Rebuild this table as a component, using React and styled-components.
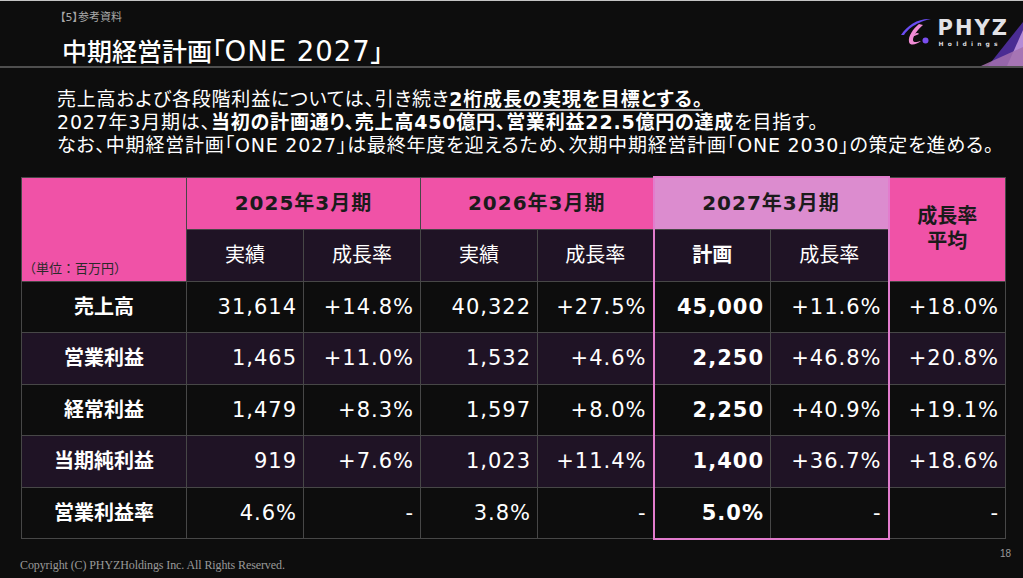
import React from 'react';
import styled, { createGlobalStyle } from 'styled-components';

const GlobalStyle = createGlobalStyle`
  html, body {
    margin: 0;
    padding: 0;
    background: #0d0d0d;
  }
  body {
    font-family: "DejaVu Sans", "Noto Sans CJK JP", sans-serif;
  }
`;

const Slide = styled.div`
  width: 1023px;
  height: 578px;
  box-sizing: border-box;
  border-top: 1px solid #c4c4c4;
  background: #0d0d0d;
  overflow: hidden;
  display: flex;
  flex-direction: column;
`;

const Header = styled.header`
  position: relative;
  flex: none;
  height: 65px;
  border-bottom: 2px solid #4e4e4e;
  padding-left: 60px;
  display: flex;
  justify-content: space-between;
`;

const HeadText = styled.div`
  display: flex;
  flex-direction: column;
`;

const SectionLabel = styled.div`
  margin-top: 10px;
  font-size: 11px;
  line-height: 14px;
  color: #a8a8a8;
  font-feature-settings: "palt";
`;

const Title = styled.h1`
  margin: 11px 0 0 2px;
  font-size: 25px;
  line-height: 30px;
  font-weight: 500;
  color: #ffffff;
  font-feature-settings: "palt";
  white-space: nowrap;
`;

const Latin = styled.span`
  font-size: 1.1em;
  letter-spacing: 1px;
`;

const Logo = styled.div`
  display: flex;
  align-items: flex-start;
  gap: 6px;
  margin: 15px 14px 0 0;
  position: relative;
  z-index: 1;
`;

const LogoWords = styled.div`
  display: flex;
  flex-direction: column;
  margin-top: 2px;
`;

const LogoName = styled.span`
  font-family: "DejaVu Sans", sans-serif;
  font-weight: bold;
  font-size: 21px;
  line-height: 21px;
  letter-spacing: 2px;
  color: #e2e2e6;
`;

const LogoSub = styled.span`
  font-family: "DejaVu Sans", sans-serif;
  font-weight: bold;
  font-size: 6px;
  line-height: 9px;
  letter-spacing: 4.2px;
  color: #d6d6da;
  margin-left: 1px;
`;

const Corner = styled.svg`
  position: absolute;
  right: 0;
  bottom: 0;
`;

const Lead = styled.div`
  flex: none;
  margin: 20px 0 0 57px;
  font-size: 19px;
  line-height: 23px;
  letter-spacing: 0.8px;
  color: #ffffff;
  white-space: nowrap;
  font-feature-settings: "palt";
`;

const Strong = styled.b`
  font-weight: bold;
`;

const Goal = styled.b`
  font-weight: bold;
  text-decoration: underline;
  text-decoration-thickness: 2px;
  text-underline-offset: 3px;
  text-decoration-color: #b8b8b8;
`;

const Table = styled.table`
  flex: none;
  margin: 19px 0 0 21px;
  width: 984px;
  table-layout: fixed;
  border-collapse: collapse;
  border: 1px solid #474747;
`;

const Row = styled.tr`
  height: ${p => (p.$head ? '52px' : '51.5px')};
`;

const Cell = styled.td`
  padding: 0 6px 0 0;
  border: 1px solid #474747;
  color: #ffffff;
  font-size: 21px;
  line-height: 24px;
  letter-spacing: 1px;
  text-align: right;
  background: ${p => (p.$alt ? '#1f1325' : '#0d0d0d')};
  font-weight: ${p => (p.$bold ? 'bold' : 'normal')};
  ${p => p.$planLeft && 'border-left: 2px solid #e27ccd;'}
  ${p => p.$planRight && 'border-right: 2px solid #e27ccd;'}
  ${p => p.$planBottom && 'border-bottom: 2px solid #e27ccd;'}
`;

const RowLabel = styled.th`
  padding: 0;
  border: 1px solid #474747;
  color: #ffffff;
  font-size: 20px;
  line-height: 24px;
  font-weight: bold;
  text-align: center;
  background: ${p => (p.$alt ? '#1f1325' : '#0d0d0d')};
`;

const PeriodHead = styled.th`
  padding: 0;
  border: 1px solid #474747;
  background: ${p => (p.$plan ? '#dc8ccf' : '#f052a7')};
  color: #1b1b1b;
  font-size: 20px;
  line-height: 24px;
  font-weight: bold;
  letter-spacing: 1px;
  text-align: center;
  ${p => p.$plan && 'border: 2px solid #e27ccd; border-bottom: 1px solid #474747;'}
`;

const UnitHead = styled.th`
  border: 1px solid #474747;
  background: #f052a7;
  vertical-align: bottom;
  text-align: left;
  padding: 0 0 4px 1px;
  font-size: 13px;
  line-height: 16px;
  font-weight: normal;
  color: #2a2a2a;
`;

const AvgHead = styled.th`
  padding: 0;
  border: 1px solid #474747;
  background: #f052a7;
  color: #1b1b1b;
  font-size: 20px;
  line-height: 25px;
  font-weight: bold;
  text-align: center;
`;

const SubHead = styled.th`
  padding: 0;
  border: 1px solid #474747;
  background: #1f1325;
  color: #ffffff;
  font-size: 20px;
  line-height: 24px;
  font-weight: ${p => (p.$bold ? 'bold' : 'normal')};
  text-align: center;
  ${p => p.$planLeft && 'border-left: 2px solid #e27ccd;'}
  ${p => p.$planRight && 'border-right: 2px solid #e27ccd;'}
`;

const Footer = styled.footer`
  margin-top: auto;
  display: flex;
  justify-content: space-between;
  align-items: flex-end;
  padding: 0 12px 5px 20px;
`;

const Copyright = styled.span`
  font-family: "Liberation Serif", serif;
  font-size: 12px;
  letter-spacing: -0.1px;
  color: #9a9a9a;
`;

const PageNo = styled.span`
  font-family: "Liberation Sans", sans-serif;
  font-size: 10px;
  color: #9a9a9a;
  margin-bottom: 14px;
`;

const widths = [165, 117, 117, 117, 116, 117, 118, 117];

const rows = [
  { label: '売上高', v: ['31,614', '+14.8%', '40,322', '+27.5%', '45,000', '+11.6%', '+18.0%'] },
  { label: '営業利益', v: ['1,465', '+11.0%', '1,532', '+4.6%', '2,250', '+46.8%', '+20.8%'] },
  { label: '経常利益', v: ['1,479', '+8.3%', '1,597', '+8.0%', '2,250', '+40.9%', '+19.1%'] },
  { label: '当期純利益', v: ['919', '+7.6%', '1,023', '+11.4%', '1,400', '+36.7%', '+18.6%'] },
  { label: '営業利益率', v: ['4.6%', '-', '3.8%', '-', '5.0%', '-', '-'] },
];

const LogoMark = () => (
  <svg width="32" height="30" viewBox="0 0 32 30">
    <path d="M1 19 C7 9, 19 2, 31 3 C26 4, 22 5, 19 7 C14 9, 8 13, 4 19 Z" fill="#6a4cf2" />
    <path d="M19 8 C13 13, 8 20, 9 26 C10 30, 16 29, 21 25 C17 26, 13 27, 13 24 C13 20, 17 14, 23 9 Z" fill="#f08bd4" />
    <path d="M12 21 C14 17, 18 16, 19 18 C17 19, 14 20, 12 21 Z" fill="#f08bd4" />
    <circle cx="25.5" cy="24.5" r="3" fill="#7a4ef0" />
  </svg>
);

export default function App() {
  return (
    <>
      <GlobalStyle />
      <Slide>
        <Header>
          <HeadText>
            <SectionLabel>【5】参考資料</SectionLabel>
            <Title>
              中期経営計画「<Latin>ONE 2027</Latin>」
            </Title>
          </HeadText>
          <Logo>
            <LogoMark />
            <LogoWords>
              <LogoName>PHYZ</LogoName>
              <LogoSub>Holdings</LogoSub>
            </LogoWords>
          </Logo>
          <Corner width="60" height="46" viewBox="0 0 60 46">
            <polygon points="60,2 25,46 60,46" fill="#4a2c93" />
            <polygon points="60,10 44,46 60,46" fill="#b48bd6" />
            <polygon points="60,27 18,46 60,46" fill="#a371ae" opacity="0.85" />
          </Corner>
        </Header>

        <Lead>
          <div>
            売上高および各段階利益については、引き続き<Goal>2桁成長の実現を目標とする。</Goal>
          </div>
          <div>
            2027年3月期は、<Strong>当初の計画通り、売上高450億円、営業利益22.5億円の達成</Strong>を目指す。
          </div>
          <div>
            なお、中期経営計画「ONE 2027」は最終年度を迎えるため、次期中期経営計画「ONE 2030」の策定を進める。
          </div>
        </Lead>

        <Table>
          <colgroup>
            {widths.map((w, i) => (
              <col key={i} style={{ width: w }} />
            ))}
          </colgroup>
          <thead>
            <Row $head>
              <UnitHead rowSpan={2}>（単位：百万円）</UnitHead>
              <PeriodHead colSpan={2}>2025年3月期</PeriodHead>
              <PeriodHead colSpan={2}>2026年3月期</PeriodHead>
              <PeriodHead colSpan={2} $plan>2027年3月期</PeriodHead>
              <AvgHead rowSpan={2}>
                成長率
                <br />
                平均
              </AvgHead>
            </Row>
            <Row $head>
              <SubHead>実績</SubHead>
              <SubHead>成長率</SubHead>
              <SubHead>実績</SubHead>
              <SubHead>成長率</SubHead>
              <SubHead $bold $planLeft>計画</SubHead>
              <SubHead $planRight>成長率</SubHead>
            </Row>
          </thead>
          <tbody>
            {rows.map((r, ri) => {
              const alt = ri % 2 === 1;
              const last = ri === rows.length - 1;
              return (
                <Row key={r.label}>
                  <RowLabel $alt={alt}>{r.label}</RowLabel>
                  {r.v.map((v, ci) => (
                    <Cell
                      key={ci}
                      $alt={alt}
                      $bold={ci === 4}
                      $planLeft={ci === 4}
                      $planRight={ci === 5}
                      $planBottom={last && (ci === 4 || ci === 5)}
                    >
                      {v}
                    </Cell>
                  ))}
                </Row>
              );
            })}
          </tbody>
        </Table>

        <Footer>
          <Copyright>Copyright (C) PHYZHoldings Inc. All Rights Reserved.</Copyright>
          <PageNo>18</PageNo>
        </Footer>
      </Slide>
    </>
  );
}
